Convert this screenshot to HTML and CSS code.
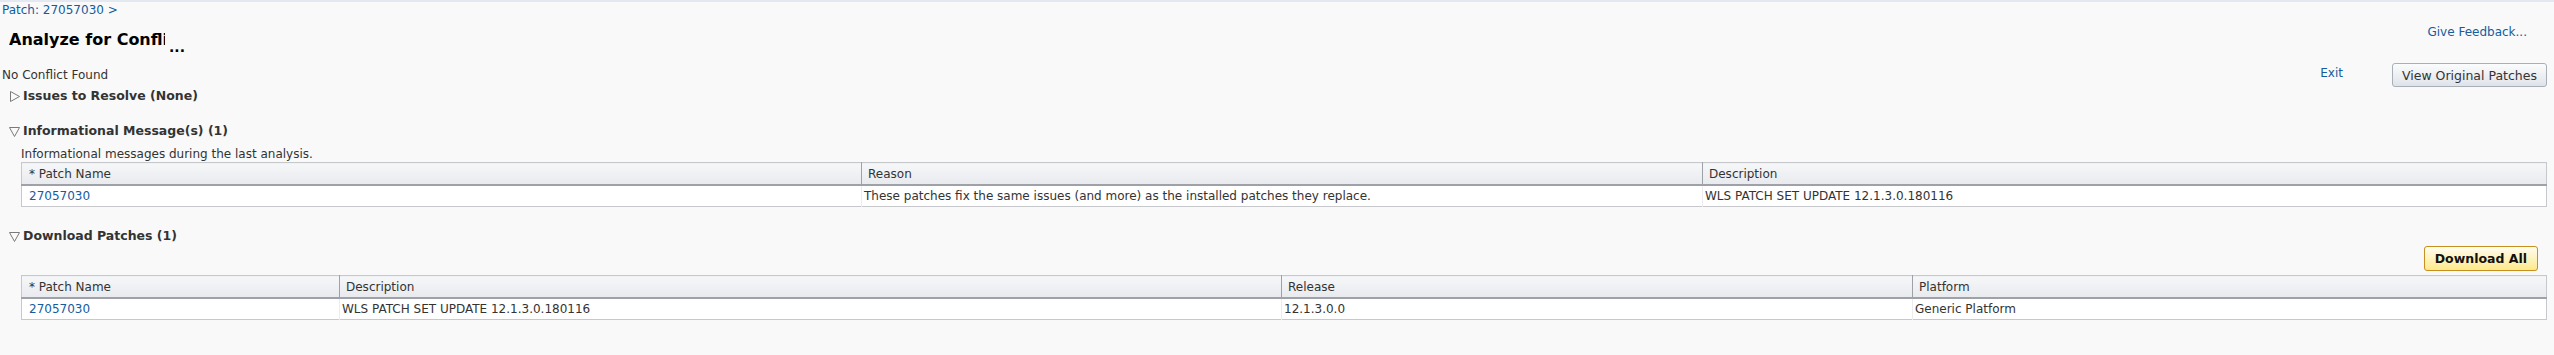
FILE: index.html
```html
<!DOCTYPE html>
<html lang="en">

<head>
    <meta charset="UTF-8">
    <meta name="viewport" content="width=device-width, initial-scale=1.0">
    <title>Analyze for Conflicts</title>
    <link rel="stylesheet" href="styles.css">
</head>

<body>
    <div class="page">
        <div class="crumbs"><a href="#">Patch: 27057030</a> &gt;</div>

        <div class="header-row">
            <div class="title"><span class="title-clip">Analyze for Conflicts</span><span class="title-more">...</span></div>
            <a class="feedback" href="#">Give Feedback...</a>
        </div>

        <div class="status-row">
            <span class="status">No Conflict Found</span>
            <div class="actions">
                <a class="exit" href="#">Exit</a>
                <button type="button" class="btn">View Original Patches</button>
            </div>
        </div>

        <div class="section-head issues">
            <svg class="twisty" width="13" height="13" viewBox="0 0 13 13"><polygon points="2.5,1.5 11.5,6.5 2.5,11.5" fill="#fafafa" stroke="#7a7a7a" stroke-width="1"/></svg>
            <span>Issues to Resolve (None)</span>
        </div>

        <div class="section-head info">
            <svg class="twisty" width="13" height="13" viewBox="0 0 13 13"><polygon points="1.5,2.5 11.5,2.5 6.5,11.5" fill="#fafafa" stroke="#7a7a7a" stroke-width="1"/></svg>
            <span>Informational Message(s) (1)</span>
        </div>
        <div class="section-body">
            <div class="note">Informational messages during the last analysis.</div>
            <table class="grid">
                <colgroup>
                    <col style="width: 840px">
                    <col style="width: 841px">
                    <col>
                </colgroup>
                <thead>
                    <tr><th>* Patch Name</th><th>Reason</th><th>Description</th></tr>
                </thead>
                <tbody>
                    <tr>
                        <td><a href="#">27057030</a></td>
                        <td>These patches fix the same issues (and more) as the installed patches they replace.</td>
                        <td>WLS PATCH SET UPDATE 12.1.3.0.180116</td>
                    </tr>
                </tbody>
            </table>
        </div>

        <div class="section-head download">
            <svg class="twisty" width="13" height="13" viewBox="0 0 13 13"><polygon points="1.5,2.5 11.5,2.5 6.5,11.5" fill="#fafafa" stroke="#7a7a7a" stroke-width="1"/></svg>
            <span>Download Patches (1)</span>
        </div>
        <div class="section-body">
            <div class="toolbar">
                <button type="button" class="btn btn-primary">Download All</button>
            </div>
            <table class="grid">
                <colgroup>
                    <col style="width: 318px">
                    <col style="width: 942px">
                    <col style="width: 631px">
                    <col>
                </colgroup>
                <thead>
                    <tr><th>* Patch Name</th><th>Description</th><th>Release</th><th>Platform</th></tr>
                </thead>
                <tbody>
                    <tr>
                        <td><a href="#">27057030</a></td>
                        <td>WLS PATCH SET UPDATE 12.1.3.0.180116</td>
                        <td>12.1.3.0.0</td>
                        <td>Generic Platform</td>
                    </tr>
                </tbody>
            </table>
        </div>
    </div>
</body>

</html>
```

FILE: styles.css
```css
body {
    margin: 0;
    background-color: #f9f9f9;
    font-family: "DejaVu Sans", Tahoma, sans-serif;
    font-size: 12px;
    color: #333;
}

a {
    color: #145c9e;
    text-decoration: none;
}

.page {
    border-top: 2px solid #e3e8f1;
}

.crumbs {
    line-height: 16px;
    padding-left: 2px;
    color: #145c9e;
}

.header-row {
    display: flex;
    justify-content: space-between;
    height: 45px;
}

.title {
    display: flex;
    align-items: flex-end;
    margin-top: 12px;
    height: 22px;
    padding-left: 9px;
    font-size: 16px;
    font-weight: bold;
    color: #000;
}

.title-clip {
    display: inline-block;
    width: 156px;
    overflow: hidden;
    white-space: nowrap;
    line-height: 20px;
    align-self: flex-start;
}

.title-more {
    margin-left: 4px;
    font-size: 14px;
    line-height: 10px;
}

.feedback {
    margin-top: 6px;
    margin-right: 27px;
    line-height: 16px;
}

.status-row {
    display: flex;
    justify-content: space-between;
    align-items: center;
    height: 24px;
    padding-left: 2px;
}

.actions {
    display: flex;
    align-items: center;
    gap: 49px;
    margin-right: 7px;
}

.exit {
    margin-top: -4px;
}

.btn {
    font-family: "DejaVu Sans", Tahoma, sans-serif;
    font-size: 12.5px;
    color: #333;
    height: 24px;
    padding: 0 9px;
    border: 1px solid #a9afb7;
    border-radius: 3px;
    background: linear-gradient(#fbfcfd, #dfe3e9);
    cursor: pointer;
}

.btn-primary {
    height: 25px;
    padding: 0 10px;
    font-size: 12.5px;
    font-weight: bold;
    color: #111;
    border-color: #c8901e;
    background: linear-gradient(#fffdf0, #ffe98c);
}

.section-head {
    display: flex;
    align-items: center;
    gap: 2px;
    padding-left: 8px;
    line-height: 16px;
    font-size: 12.5px;
    font-weight: bold;
}

.twisty {
    flex: none;
}

.issues {
    margin-top: 1px;
}

.info {
    margin-top: 19px;
}

.download {
    margin-top: 21px;
}

.section-body {
    padding-left: 21px;
    padding-right: 7px;
}

.note {
    margin-top: 7px;
    line-height: 16px;
}

.toolbar {
    display: flex;
    justify-content: flex-end;
    margin-top: 2px;
    margin-bottom: 4px;
    padding-right: 9px;
}

.grid {
    width: 100%;
    border-collapse: collapse;
    table-layout: fixed;
    background: #fff;
    border: 1px solid #c6c8cc;
}

.grid th {
    height: 21px;
    padding: 0 6px;
    text-align: left;
    font-weight: normal;
    color: #333;
    background: linear-gradient(#f6f7f9, #e8eaee);
    border-bottom: 2px solid #9ea1a8;
    border-left: 1px solid #9ea1a8;
}

.grid td {
    height: 20px;
    padding: 0 6px;
    white-space: nowrap;
    border-left: 1px solid #ececec;
}

.grid th:first-child,
.grid td:first-child {
    border-left: none;
    padding-left: 7px;
}

.grid td:nth-child(n+2) {
    padding-left: 2px;
}
```
